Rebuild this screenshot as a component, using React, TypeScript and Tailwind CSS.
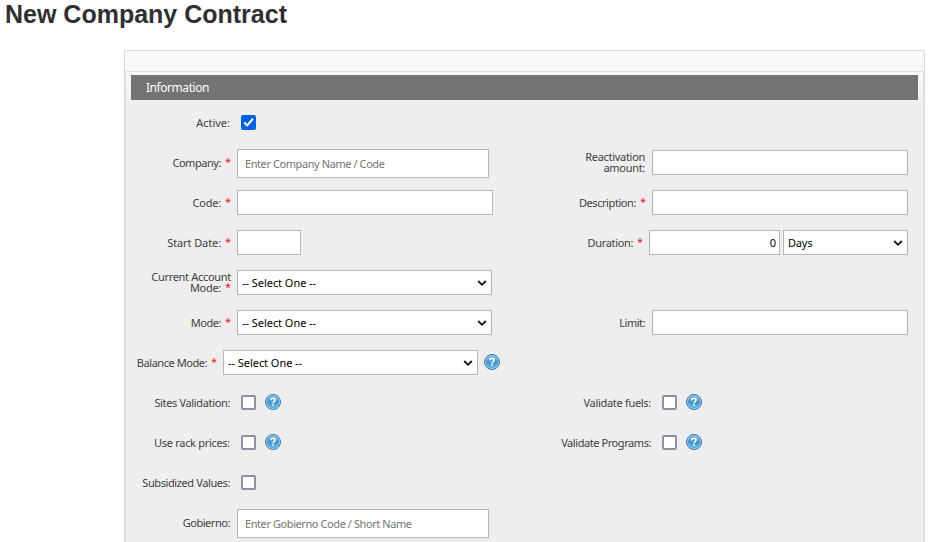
import type { ReactNode } from "react";

const box = "shrink-0 border border-[#b7b7b7] bg-white";

function Label({ text, required, width, twoLines, tracking = "tracking-[-0.35px]" }: { text: ReactNode; required?: boolean; width: string; twoLines?: boolean; tracking?: string }) {
  return (
    <div className={`${width} ${tracking} shrink-0 whitespace-nowrap text-right leading-[11px] ${twoLines ? "mt-2" : "mt-[14px]"} ${required ? "" : "pr-px"}`}>
      {text}
      {required && <span className="ml-[4px] inline-block h-[11px] w-[6px] -translate-y-px text-center text-[11px] tracking-normal text-[#f5102a]">*</span>}
    </div>
  );
}

function Select({ value, width, tracking = "tracking-[-0.05px]" }: { value: string; width: string; tracking?: string }) {
  return (
    <div className={`${box} ${width} mt-[7px] flex h-[25px] items-center justify-between pl-1 pr-1 text-black ${tracking}`}>
      <span className="pt-px">{value}</span>
      <svg width="10" height="8" viewBox="0 0 10 8" fill="none" stroke="#111" strokeWidth="1.8">
        <path d="M1.2 2L5 5.8L8.8 2" />
      </svg>
    </div>
  );
}

function Field({ width }: { width: string }) {
  return <div className={`${box} ${width} mt-[7px] h-[25px]`} />;
}

function Search({ text }: { text: string }) {
  return <div className={`${box} mt-[6px] flex h-[29px] w-[252px] items-center pl-[7px] pt-[2px] text-[#757575] tracking-[-0.42px]`}>{text}</div>;
}

function Check({ checked }: { checked?: boolean }) {
  return checked ? (
    <div className="ml-1 mt-3 h-[15px] w-[15px] shrink-0 rounded-xs bg-[#0060df]">
      <svg width="15" height="15" viewBox="0 0 15 15" fill="none" stroke="white" strokeWidth="2" strokeLinecap="round" strokeLinejoin="round">
        <path d="M3.7 8L6.2 10.5L11.6 4.2" />
      </svg>
    </div>
  ) : (
    <div className="ml-1 mt-3 h-[15px] w-[15px] shrink-0 rounded-xs border-2 border-[#8f8f9d] bg-white" />
  );
}

function Help({ margin }: { margin: string }) {
  return (
    <svg className={`${margin} mt-[11px] shrink-0`} width="16" height="16" viewBox="0 0 16 16">
      <defs>
        <linearGradient id="helpFill" x1="0" y1="0" x2="0" y2="1">
          <stop offset="0" stopColor="#84b9df" />
          <stop offset=".5" stopColor="#4590cb" />
          <stop offset="1" stopColor="#5cbcec" />
        </linearGradient>
      </defs>
      <circle cx="8" cy="8" r="7.5" fill="#a9d6ef" stroke="#2c7aac" />
      <circle cx="8" cy="8" r="6" fill="url(#helpFill)" stroke="#4a95c8" strokeWidth=".4" />
      <path d="M5.9 6.2C5.9 3.7 10.1 3.7 10.1 6.1C10.1 7.6 8 7.5 8 9.2" fill="none" stroke="white" strokeWidth="1.6" />
      <rect x="7.2" y="10.2" width="1.6" height="1.6" fill="white" />
    </svg>
  );
}

function Row({ left, right }: { left: ReactNode; right?: ReactNode }) {
  return (
    <div className="flex h-10">
      <div className="flex w-[420px] shrink-0 items-start gap-[6px]">{left}</div>
      <div className="flex items-start gap-[6px]">{right}</div>
    </div>
  );
}

export default function App() {
  return (
    <main className="h-[542px] w-[931px] overflow-hidden bg-white font-['Noto_Sans',sans-serif] text-[11px] text-[#404040]">
      <h1 className="h-[50px] pl-[5px] font-['Liberation_Sans',Arial,sans-serif] text-[25px] font-bold leading-[29px] text-[#303030]">New Company Contract</h1>
      <section className="ml-[124px] h-[520px] w-[801px] border border-[#d9d9d9] bg-[#f8f8f8] pt-5">
        <div className="h-[500px] border border-[#e2e2da] bg-[#eeeeee] bg-linear-to-b from-[#f9f9f9] to-[#eeeeee] to-[34px]">
          <h2 className="ml-[5px] mt-[3px] h-[25px] w-[787px] bg-[#737373] pl-[15px] text-[12px] leading-[25px] tracking-[-0.45px] text-white">Information</h2>
          <div className="pt-[3px]">
            <Row left={<><Label width="w-[105px]" text="Active:" tracking="tracking-normal" /><Check checked /></>} />
            <Row
              left={<><Label width="w-[105px]" text="Company:" required tracking="tracking-[-0.45px]" /><Search text="Enter Company Name / Code" /></>}
              right={<><Label width="w-[100px]" text={<>Reactivation<br />amount:</>} twoLines tracking="tracking-[-0.3px]" /><Field width="w-[256px]" /></>}
            />
            <Row
              left={<><Label width="w-[105px]" text="Code:" required tracking="tracking-[-0.2px]" /><Field width="w-[256px]" /></>}
              right={<><Label width="w-[100px]" text="Description:" required tracking="tracking-[-0.42px]" /><Field width="w-[256px]" /></>}
            />
            <Row
              left={<><Label width="w-[105px]" text="Start Date:" required tracking="tracking-[-0.1px]" /><Field width="w-[64px]" /></>}
              right={<><Label width="w-[97px]" text="Duration:" required /><div className={`${box} mt-[7px] h-[25px] w-[131px] pr-[3px] text-right leading-[24px] text-black`}>0</div><div className="-ml-[3px]"><Select value="Days" width="w-[125px]" tracking="tracking-[-0.2px]" /></div></>}
            />
            <Row left={<><Label width="w-[105px]" text={<>Current Account<br />Mode:</>} required twoLines tracking="tracking-[-0.3px]" /><Select value="-- Select One --" width="w-[255px]" /></>} />
            <Row
              left={<><Label width="w-[105px]" text="Mode:" required tracking="tracking-[-0.45px]" /><Select value="-- Select One --" width="w-[255px]" /></>}
              right={<><Label width="w-[100px]" text="Limit:" tracking="tracking-[-0.5px]" /><Field width="w-[256px]" /></>}
            />
            <Row left={<><Label width="w-[91px]" text="Balance Mode:" required tracking="tracking-[-0.45px]" /><Select value="-- Select One --" width="w-[255px]" /><Help margin="" /></>} />
            <Row
              left={<><Label width="w-[105px]" text="Sites Validation:" /><Check /><Help margin="ml-[3px]" /></>}
              right={<><Label width="w-[106px]" text="Validate fuels:" tracking="tracking-[-0.3px]" /><Check /><Help margin="ml-[3px]" /></>}
            />
            <Row
              left={<><Label width="w-[105px]" text="Use rack prices:" tracking="tracking-[-0.3px]" /><Check /><Help margin="ml-[3px]" /></>}
              right={<><Label width="w-[106px]" text="Validate Programs:" tracking="tracking-[-0.43px]" /><Check /><Help margin="ml-[3px]" /></>}
            />
            <Row left={<><Label width="w-[105px]" text="Subsidized Values:" tracking="tracking-[-0.4px]" /><Check /></>} />
            <Row left={<><Label width="w-[105px]" text="Gobierno:" tracking="tracking-[-0.45px]" /><Search text="Enter Gobierno Code / Short Name" /></>} />
          </div>
        </div>
      </section>
    </main>
  );
}
